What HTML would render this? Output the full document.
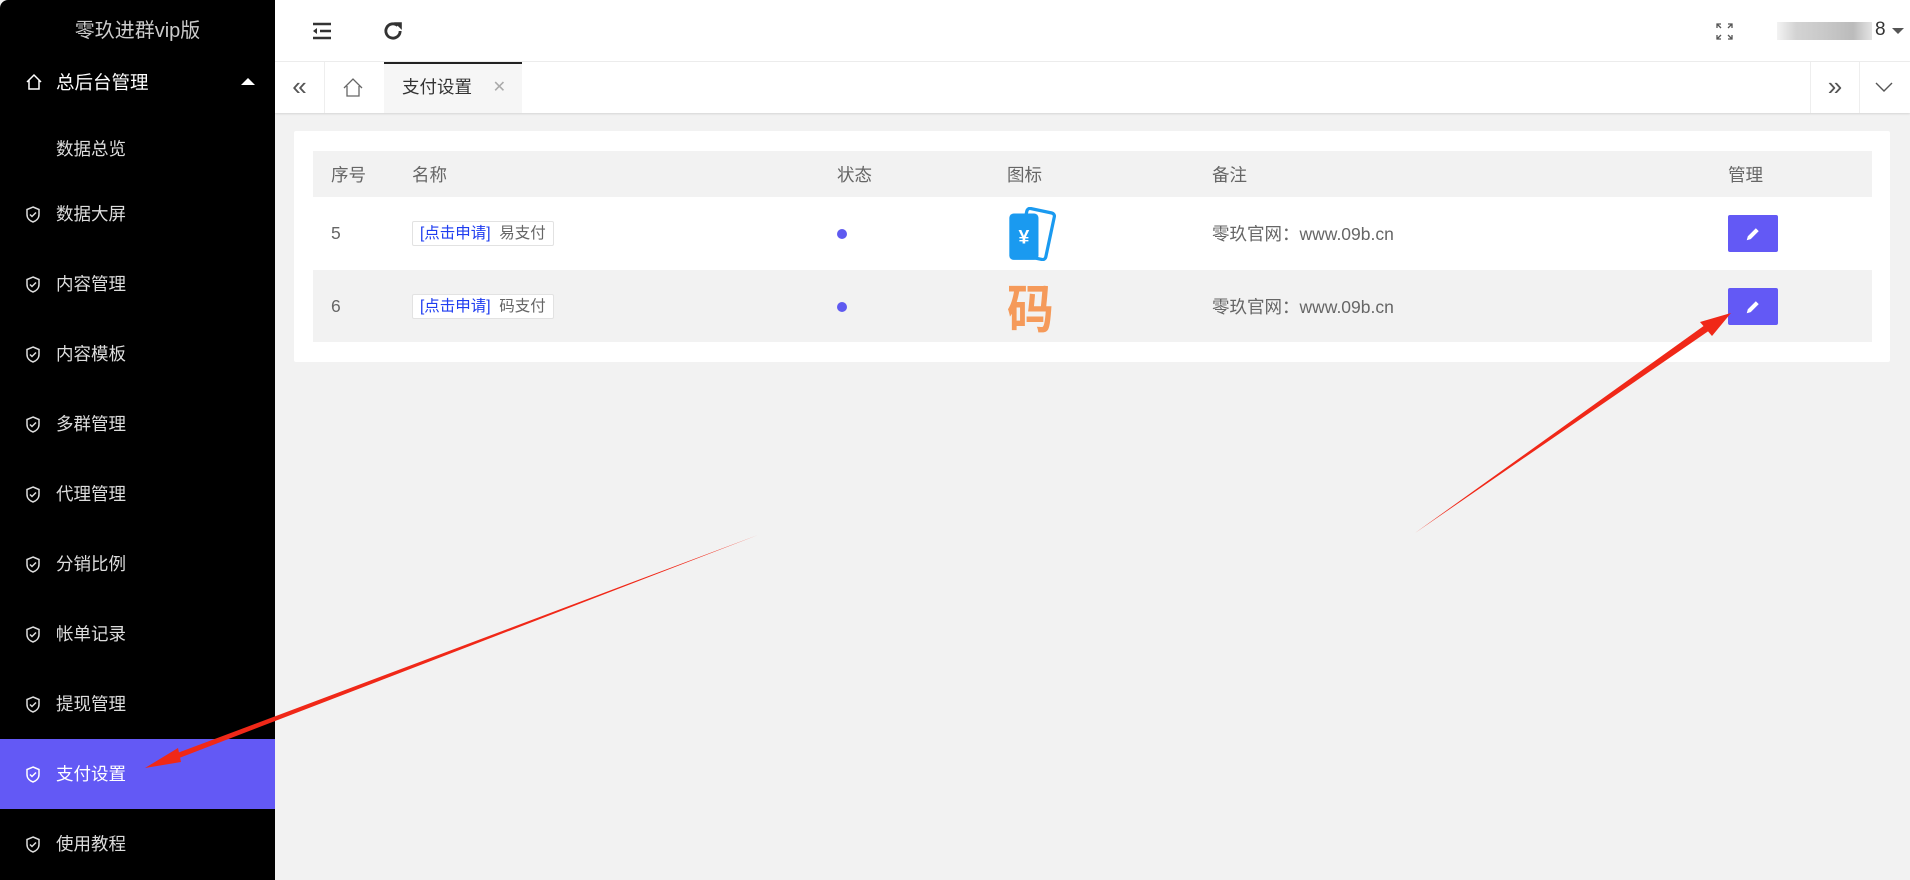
<!DOCTYPE html>
<html><head><meta charset="utf-8"><style>
*{margin:0;padding:0;box-sizing:border-box}
body{width:1910px;height:880px;background:#f2f2f2;font-family:"Liberation Sans","Noto Sans CJK SC",sans-serif;position:relative;overflow:hidden;color:#555}
.side{position:absolute;left:0;top:0;width:275px;height:880px;background:#000;border-top-left-radius:8px}
.logo{position:absolute;top:14px;width:275px;text-align:center;color:#ccc;font-size:20px}
.it{position:absolute;left:0;width:275px;height:70px;line-height:70px;color:#ddd;font-size:17.5px;padding-left:56px}
.it svg{position:absolute;left:25px;top:27px}
.act{background:#6359f5;color:#fff}
.hdr{position:absolute;left:275px;top:0;right:0;height:62px;background:#fff;border-bottom:1px solid #eee}
.tabs{position:absolute;left:275px;top:62px;right:0;height:51px;background:#fff;box-shadow:0 1px 2px rgba(0,0,0,.12)}
.card{position:absolute;left:294px;top:131px;width:1596px;height:231px;background:#fff;border-radius:2px}
table{position:absolute;left:19px;top:20px;width:1559px;border-collapse:collapse;font-size:17.5px;table-layout:fixed}
td,th{text-align:left;font-weight:normal;color:#666;padding:0}
th{height:46px;background:#f2f2f2}
.tag{display:inline-block;border:1px solid #e2e2e2;border-radius:2px;padding:0 7px;height:25px;line-height:23px;font-size:15.5px}
.tag b{font-weight:normal;color:#1e3cf0}
.dot{display:inline-block;width:10px;height:10px;border-radius:50%;background:#5f5af0}
.btn{display:inline-block;width:50px;height:37px;background:#6359f5;border-radius:2px;position:relative;vertical-align:middle}
</style></head><body>
<div class="side">
<div class="logo">零玖进群vip版</div>
<div class="it" style="top:48px;color:#fff;font-size:18.5px"><svg width="18" height="18" viewBox="0 0 18 18" style="top:25px"><path d="M2 9L9 2l7 7M4 7v9h10V7" fill="none" stroke="#fff" stroke-width="1.5"/></svg>总后台管理<span style="position:absolute;right:20px;top:30px;border:7px solid transparent;border-bottom-color:#fff;border-top:0"></span></div>
<div class="it" style="top:114px">数据总览</div>
<div class="it" style="top:179px"><svg width="16" height="17" viewBox="0 0 16 17"><path d="M8 1l6 2.5v5c0 4-3 6.5-6 7.5-3-1-6-3.5-6-7.5v-5z M5 8.5l2 2 4-4" fill="none" stroke="#ddd" stroke-width="1.5"/></svg>数据大屏</div>
<div class="it" style="top:249px"><svg width="16" height="17" viewBox="0 0 16 17"><path d="M8 1l6 2.5v5c0 4-3 6.5-6 7.5-3-1-6-3.5-6-7.5v-5z M5 8.5l2 2 4-4" fill="none" stroke="#ddd" stroke-width="1.5"/></svg>内容管理</div>
<div class="it" style="top:319px"><svg width="16" height="17" viewBox="0 0 16 17"><path d="M8 1l6 2.5v5c0 4-3 6.5-6 7.5-3-1-6-3.5-6-7.5v-5z M5 8.5l2 2 4-4" fill="none" stroke="#ddd" stroke-width="1.5"/></svg>内容模板</div>
<div class="it" style="top:389px"><svg width="16" height="17" viewBox="0 0 16 17"><path d="M8 1l6 2.5v5c0 4-3 6.5-6 7.5-3-1-6-3.5-6-7.5v-5z M5 8.5l2 2 4-4" fill="none" stroke="#ddd" stroke-width="1.5"/></svg>多群管理</div>
<div class="it" style="top:459px"><svg width="16" height="17" viewBox="0 0 16 17"><path d="M8 1l6 2.5v5c0 4-3 6.5-6 7.5-3-1-6-3.5-6-7.5v-5z M5 8.5l2 2 4-4" fill="none" stroke="#ddd" stroke-width="1.5"/></svg>代理管理</div>
<div class="it" style="top:529px"><svg width="16" height="17" viewBox="0 0 16 17"><path d="M8 1l6 2.5v5c0 4-3 6.5-6 7.5-3-1-6-3.5-6-7.5v-5z M5 8.5l2 2 4-4" fill="none" stroke="#ddd" stroke-width="1.5"/></svg>分销比例</div>
<div class="it" style="top:599px"><svg width="16" height="17" viewBox="0 0 16 17"><path d="M8 1l6 2.5v5c0 4-3 6.5-6 7.5-3-1-6-3.5-6-7.5v-5z M5 8.5l2 2 4-4" fill="none" stroke="#ddd" stroke-width="1.5"/></svg>帐单记录</div>
<div class="it" style="top:669px"><svg width="16" height="17" viewBox="0 0 16 17"><path d="M8 1l6 2.5v5c0 4-3 6.5-6 7.5-3-1-6-3.5-6-7.5v-5z M5 8.5l2 2 4-4" fill="none" stroke="#ddd" stroke-width="1.5"/></svg>提现管理</div>
<div class="it act" style="top:739px"><svg width="16" height="17" viewBox="0 0 16 17"><path d="M8 1l6 2.5v5c0 4-3 6.5-6 7.5-3-1-6-3.5-6-7.5v-5z M5 8.5l2 2 4-4" fill="none" stroke="#fff" stroke-width="1.5"/></svg>支付设置</div>
<div class="it" style="top:809px"><svg width="16" height="17" viewBox="0 0 16 17"><path d="M8 1l6 2.5v5c0 4-3 6.5-6 7.5-3-1-6-3.5-6-7.5v-5z M5 8.5l2 2 4-4" fill="none" stroke="#ddd" stroke-width="1.5"/></svg>使用教程</div>
</div>
<div class="hdr">
<svg style="position:absolute;left:37px;top:22px" width="20" height="18" viewBox="0 0 20 18"><path d="M1 2h18M8 9h11M1 16h18" stroke="#333" stroke-width="2.4"/><path d="M1 9l4-3v6z" fill="#333"/></svg>
<svg style="position:absolute;left:107px;top:20px" width="22" height="22" viewBox="0 0 20 20"><path d="M16.5 10a6.5 6.5 0 1 1-2.2-4.9" fill="none" stroke="#333" stroke-width="2.6"/><path d="M11 2h7v7z" fill="#333"/></svg>
<svg style="position:absolute;left:1441px;top:23px" width="17" height="17" viewBox="0 0 17 17" fill="none" stroke="#555" stroke-width="1.3"><path d="M1 5V1h4M1 1l4 4M16 5V1h-4M16 1l-4 4M1 12v4h4M1 16l4-4M16 12v4h-4M16 16l-4-4"/></svg>
<div style="position:absolute;left:1502px;top:22px;width:95px;height:18px;background:linear-gradient(90deg,#f0f0f0,#c8c8c8 20%,#bbb 50%,#aaa 80%,#ddd);opacity:.8"></div>
<span style="position:absolute;left:1600px;top:19px;font-size:19px;color:#333">8</span>
<span style="position:absolute;left:1617px;top:28px;border:6px solid transparent;border-top-color:#555;border-bottom:0"></span>
</div>
<div class="tabs">
<div style="position:absolute;left:0;top:0;width:50px;height:51px;border-right:1px solid #eee;text-align:center;line-height:48px;font-size:26px;color:#555">«</div>
<svg style="position:absolute;left:68px;top:16px" width="20" height="19" viewBox="0 0 20 19"><path d="M1 10L10 1l9 9M4 8v10h12V8" fill="none" stroke="#666" stroke-width="1.3"/></svg>
<div style="position:absolute;left:109px;top:0;width:138px;height:51px;background:#f6f6f6;border-top:2px solid #222;font-size:17.5px;color:#333;line-height:47px;padding-left:18px">支付设置<span style="position:absolute;right:16px;color:#aaa;font-size:16px">✕</span></div>
<div style="position:absolute;right:50px;top:0;width:50px;height:51px;border-left:1px solid #eee;border-right:1px solid #eee;text-align:center;line-height:48px;font-size:26px;color:#555">»</div>
<svg style="position:absolute;right:17px;top:20px" width="18" height="10" viewBox="0 0 18 10"><path d="M1 1l8 8 8-8" fill="none" stroke="#555" stroke-width="1.4"/></svg>
</div>
<div class="card">
<table>
<colgroup><col style="width:99px"><col style="width:425px"><col style="width:170px"><col style="width:205px"><col style="width:516px"><col></colgroup>
<tr><th style="padding-left:18px">序号</th><th>名称</th><th>状态</th><th>图标</th><th>备注</th><th>管理</th></tr>
<tr style="height:73px"><td style="padding-left:18px">5</td><td><span class="tag"><b>[点击申请]</b> &nbsp;易支付</span></td><td><span class="dot"></span></td>
<td><svg width="50" height="54" viewBox="0 0 46 50" style="vertical-align:middle"><rect x="14" y="3" width="26" height="44" rx="3" transform="rotate(12 27 25)" fill="none" stroke="#1a9af0" stroke-width="3"/><rect x="2" y="6" width="27" height="43" rx="4" fill="#1a9af0"/><text x="15.5" y="34" font-size="18" fill="#fff" text-anchor="middle" font-weight="bold">¥</text></svg></td>
<td>零玖官网：www.09b.cn</td><td><span class="btn"><svg style="position:absolute;left:17px;top:11px" width="16" height="16" viewBox="0 0 14 14"><path d="M1.5 12.5l1-3.5 7-7 2.5 2.5-7 7z" fill="#fff"/></svg></span></td></tr>
<tr style="height:72px;background:#f2f2f2"><td style="padding-left:18px">6</td><td><span class="tag" style="background:#fff"><b>[点击申请]</b> &nbsp;码支付</span></td><td><span class="dot"></span></td>
<td><span style="font-family:'Noto Sans CJK SC',sans-serif;font-size:52px;color:#f59a5a;font-weight:bold;line-height:54px;display:inline-block;transform:scaleX(0.9);transform-origin:left">码</span></td>
<td>零玖官网：www.09b.cn</td><td><span class="btn"><svg style="position:absolute;left:17px;top:11px" width="16" height="16" viewBox="0 0 14 14"><path d="M1.5 12.5l1-3.5 7-7 2.5 2.5-7 7z" fill="#fff"/></svg></span></td></tr>
</table>
</div>
<svg style="position:absolute;left:0;top:0" width="1910" height="880">
<polygon points="758,535 172,755 174,760" fill="#f02818"/>
<polygon points="145,768 178,748 181,762" fill="#f02818"/>
<polygon points="1415,533 1705,325 1710,330" fill="#f02818"/>
<polygon points="1731,313 1700,322 1712,336" fill="#f02818"/>
</svg>
</body></html>
